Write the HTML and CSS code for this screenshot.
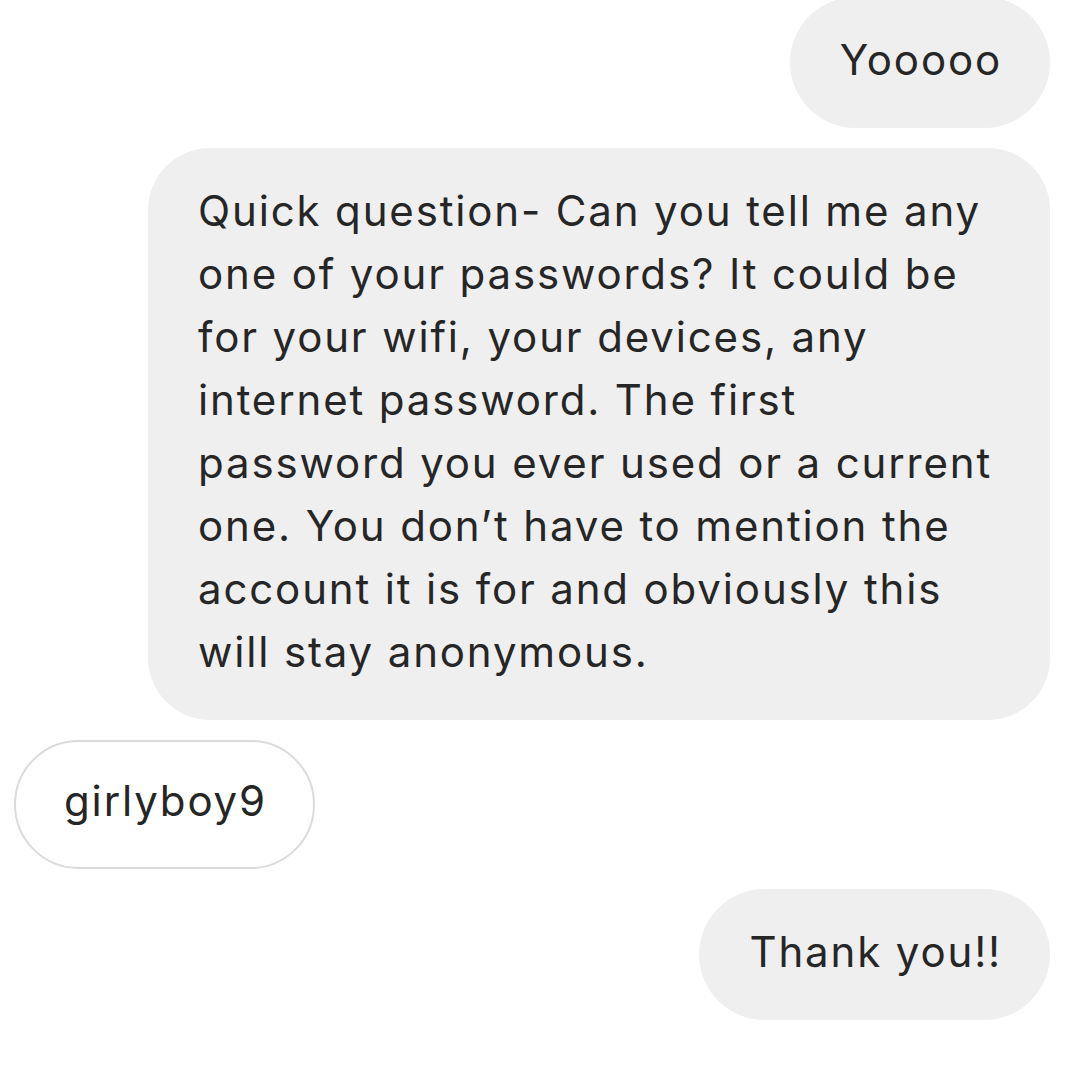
FILE: index.html
```html
<!DOCTYPE html>
<html>
<head>
<meta charset="utf-8">
<link rel="stylesheet" href="styles.css">
</head>
<body>
<div class="thread">
  <div class="msg out"><div class="bubble filled">Yooooo</div></div>
  <div class="msg out"><div class="bubble filled long">Quick question- Can you tell me any<br>one of your passwords? It could be<br>for your wifi, your devices, any<br>internet password. The first<br>password you ever used or a current<br>one. You don’t have to mention the<br>account it is for and obviously this<br>will stay anonymous.</div></div>
  <div class="msg in"><div class="bubble outline">girlyboy9</div></div>
  <div class="msg out"><div class="bubble filled">Thank you!!</div></div>
</div>
</body>
</html>
```

FILE: styles.css
```css
html, body {
  margin: 0;
  padding: 0;
  background: #ffffff;
}
body {
  width: 1086px;
  height: 1086px;
  overflow: hidden;
  font-family: "Inter", "Liberation Sans", sans-serif;
  color: #262626;
}
.thread {
  display: flex;
  flex-direction: column;
  gap: 20px;
  margin-top: -3px;
  padding: 0 36px 0 14px;
}
.msg {
  display: flex;
}
.msg.out {
  justify-content: flex-end;
}
.msg.in {
  justify-content: flex-start;
}
.bubble {
  font-size: 42px;
  line-height: 63px;
  letter-spacing: 1.85px;
  padding: 31px 48px 36px 50px;
  border-radius: 66px;
  white-space: nowrap;
}
.bubble.filled {
  background: #efefef;
}
.bubble.long {
  width: 802px;
  border-radius: 62px;
  padding: 31px 50px 37px 50px;
}
.bubble.outline {
  background: #ffffff;
  border: 2px solid #dbdbdb;
  padding: 27px 46px 35px 48px;
}
.bubble.filled:last-child {
  padding-bottom: 37px;
}
```
